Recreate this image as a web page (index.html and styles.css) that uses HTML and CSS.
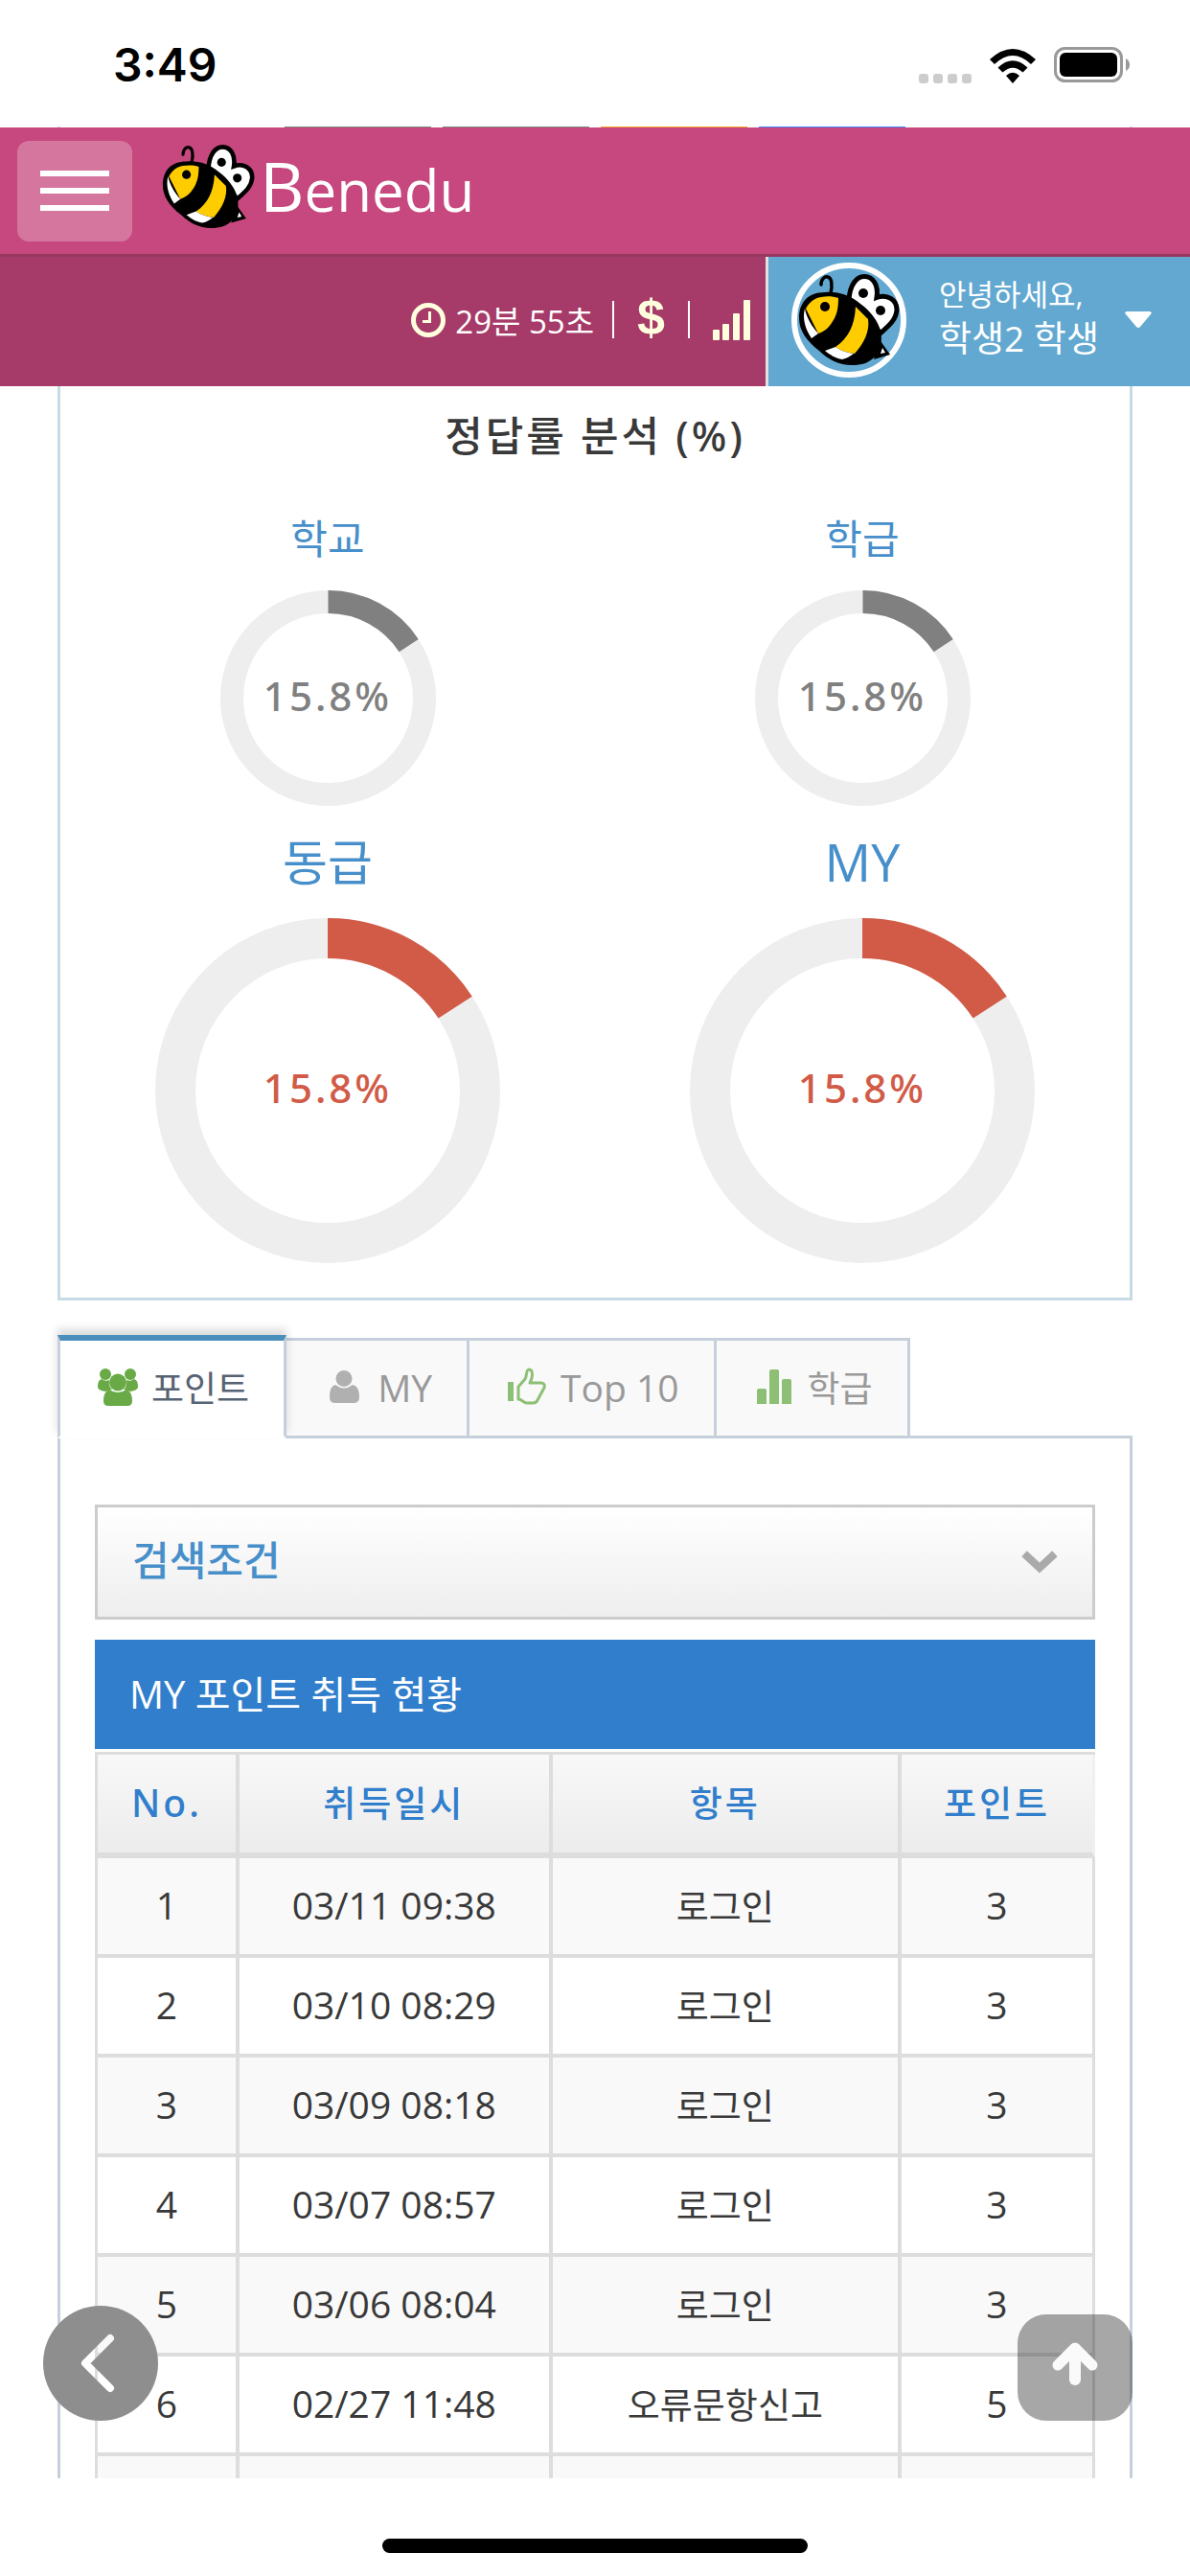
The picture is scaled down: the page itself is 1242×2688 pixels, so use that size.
FILE: index.html
```html
<!DOCTYPE html>
<html lang="ko">
<head>
    <meta charset="UTF-8">
    <meta name="viewport" content="width=device-width, initial-scale=1.0">
    <title>Benedu</title>
    <link rel="stylesheet" href="styles.css">
</head>
<body>
    <!-- Bee mascot, shared by the logo and the avatar -->
    <svg class="defs" aria-hidden="true">
        <symbol id="bee" viewBox="0 0 106 98">
            <path d="M24 12c0-6 4-9 7-8 4 1 5 8 3 17" fill="none" stroke="#000" stroke-width="3.5" stroke-linecap="round"/>
            <path d="M84 68l12 17-17 5z" fill="#000"/>
            <path d="M53 28C54 12 61 3.500 69 3.500c10 0 15 10 13 22 11-4 21 2 21 13-1 11-9 17-17 24z" fill="#fff" stroke="#000" stroke-width="5"/>
            <circle cx="68" cy="21" r="5"/>
            <circle cx="86" cy="39" r="5"/>
            <path d="M1 47C1 31 10 20 28 20c14-1 26 3 37 12 11 8 18 18 21 28 2 10 1 20-6 27-6 7-14 9-24 9-13 0-25-6-34-15C9 71 1 60 1 47z"/>
            <path d="M8 37c4-7 9-11 16-12 6-1 12-1 18 1 0 12-2 19-7 26-3 5-8 9-14 11z" fill="#ffcc00"/>
            <path d="M7 37c2 10 7 18 14 26l-7 5C8 59 4 48 7 37z" fill="#fff"/>
            <circle cx="28" cy="35" r="5"/>
            <path d="M60 35l13 13c2 12-4 25-14 36-8-1-14-3-20-7 13-9 20-22 21-42z" fill="#ffcc00"/>
            <path d="M39 77c6 4 12 6 19 7-4 3-7 5-12 6-7-1-13-5-18-9z" fill="#fff"/>
            <path d="M88 78l3 5-5 1z" fill="#fff"/>
        </symbol>
    </svg>

    <div class="status-bar">
        <span class="status-time">3:49</span>
        <div class="status-icons">
            <span class="dots"><i></i><i></i><i></i><i></i></span>
            <svg width="48" height="36" viewBox="0 0 48 36">
                <path d="M0 11Q24-11 48 11L43 16Q24-2 5 16z"/>
                <path d="M8.500 19.500Q24 5 39.500 19.500L34.500 24.500Q24 15 13.500 24.500z"/>
                <path d="M17 28Q24 21.500 31 28L24 36z"/>
            </svg>
            <svg width="80" height="38" viewBox="0 0 80 38">
                <rect x="1.500" y="1.500" width="69" height="34" rx="10" fill="none" stroke="#999" stroke-width="3"/>
                <rect x="6" y="6" width="60" height="25" rx="6"/>
                <path d="M75 12q4 2 4 6.500t-4 6.500z" fill="#999"/>
            </svg>
        </div>
    </div>

    <!-- Lower edge of the content scrolled under the header -->
    <div class="scrolled-edge"><i class="edge-gray"></i><i class="edge-gray"></i><i class="edge-orange"></i><i class="edge-blue"></i></div>

    <header class="navbar">
        <button class="menu-toggle" aria-label="메뉴"><i></i><i></i><i></i></button>
        <a class="brand" href="#">
            <svg class="brand-bee"><use href="#bee"/></svg>
            <span class="brand-name"><b>B</b>enedu</span>
        </a>
    </header>

    <nav class="user-bar">
        <div class="user-tools">
            <svg width="36" height="36" viewBox="0 0 36 36" fill="none" stroke="#ffffdd" stroke-width="5">
                <circle cx="18" cy="18" r="15.500"/>
                <path d="M19.500 9v10.500H12" stroke-width="3"/>
            </svg>
            <span class="timer">29분 55초</span>
            <span class="bar"></span>
            <a class="dollar" href="#">$</a>
            <span class="bar"></span>
            <svg class="signal" width="39" height="42" viewBox="0 0 39 42" fill="#ffffdd">
                <rect y="31" width="7" height="11" rx="1"/>
                <rect x="10" y="25" width="7" height="17" rx="1"/>
                <rect x="21" y="14" width="7" height="28" rx="1"/>
                <rect x="32" width="7" height="42" rx="1"/>
            </svg>
        </div>
        <button class="user-menu">
            <span class="avatar"><svg><use href="#bee"/></svg></span>
            <span class="user-info"><small>안녕하세요,</small>학생2 학생</span>
            <svg width="28" height="18" viewBox="0 0 28 18" fill="#fff"><path d="M2 0h24q3 1 1 3L16 16q-2 2-4 0L1 3Q-1 1 2 0z"/></svg>
        </button>
    </nav>

    <main class="content">
        <section class="stats">
            <h2>정답률 분석 (%)</h2>
            <div class="charts">
                <div class="chart">
                    <h3>학교</h3>
                    <div class="ring ring-small">
                        <svg viewBox="0 0 225 225"><circle cx="112.500" cy="112.500" r="100.500"/><circle class="value" cx="112.500" cy="112.500" r="100.500" pathLength="1000" stroke-dasharray="158 842"/></svg>
                        <span>15.8%</span>
                    </div>
                </div>
                <div class="chart">
                    <h3>학급</h3>
                    <div class="ring ring-small">
                        <svg viewBox="0 0 225 225"><circle cx="112.500" cy="112.500" r="100.500"/><circle class="value" cx="112.500" cy="112.500" r="100.500" pathLength="1000" stroke-dasharray="158 842"/></svg>
                        <span>15.8%</span>
                    </div>
                </div>
                <div class="chart">
                    <h3 class="large">동급</h3>
                    <div class="ring ring-large">
                        <svg viewBox="0 0 360 360"><circle cx="180" cy="180" r="159"/><circle class="value" cx="180" cy="180" r="159" pathLength="1000" stroke-dasharray="158 842"/></svg>
                        <span>15.8%</span>
                    </div>
                </div>
                <div class="chart">
                    <h3 class="large latin">MY</h3>
                    <div class="ring ring-large">
                        <svg viewBox="0 0 360 360"><circle cx="180" cy="180" r="159"/><circle class="value" cx="180" cy="180" r="159" pathLength="1000" stroke-dasharray="158 842"/></svg>
                        <span>15.8%</span>
                    </div>
                </div>
            </div>
        </section>

        <div class="tabs" role="tablist">
            <button class="tab active" role="tab">
                <svg viewBox="0 0 48 42" fill="#69aa46">
                    <circle cx="11" cy="8" r="6"/><circle cx="37" cy="8" r="6"/>
                    <path d="M7 13q4 3 8 1-1 7 3 10-5 1-7 2-8-1-8-5 0-7 4-8zM41 13q-4 3-8 1 1 7-3 10 5 1 7 2 8-1 8-5 0-7-4-8z"/>
                    <circle cx="24" cy="16.500" r="9"/>
                    <path d="M15 24q9 6 18 0 6 2 6 12 0 5-5 5H14q-5 0-5-5 0-10 6-12z"/>
                </svg>
                포인트
            </button>
            <button class="tab" role="tab">
                <svg viewBox="0 0 48 42" fill="#b0b0b0">
                    <circle cx="24" cy="12.500" r="8.500"/>
                    <path d="M15 19q9 7 18 0 7 1 7 13 0 6-6 6H15q-6 0-6-6 0-12 6-13z"/>
                </svg>
                <span class="latin">MY</span>
            </button>
            <button class="tab" role="tab">
                <svg viewBox="0 0 48 42" fill="none" stroke="#8dbf74" stroke-width="3" stroke-linejoin="round">
                    <path d="M4 16h6v20H4z" fill="#8dbf74" stroke="none"/>
                    <path d="M15 34V21l7-8c2-3 1-10 4-10 5 0 4 9 1 14h12c3 0 4 3 3 5l-7 13c-1 3-3 3-5 3h-6c-4 0-5-4-9-4z"/>
                </svg>
                <span class="latin">Top 10</span>
            </button>
            <button class="tab" role="tab">
                <svg viewBox="0 0 48 42" fill="#8dbf74">
                    <path d="M6 39V25q0-2 2-2h6q2 0 2 2v14zM19 39V5q0-2 2-2h6q2 0 2 2v34zM32 39V15q0-2 2-2h6q2 0 2 2v24z"/>
                </svg>
                학급
            </button>
        </div>

        <section class="tab-content">
            <button class="search-toggle">
                검색조건
                <svg width="38" height="25" viewBox="0 0 38 25"><path d="M6 6l13 12L32 6" fill="none" stroke="#aaa" stroke-width="8" stroke-linecap="square"/></svg>
            </button>
            <h2 class="table-title">MY 포인트 취득 현황</h2>
            <table class="points">
                <colgroup><col class="col-no"><col class="col-date"><col class="col-item"><col></colgroup>
                <thead>
                    <tr><th class="latin">No.</th><th>취득일시</th><th>항목</th><th>포인트</th></tr>
                </thead>
                <tbody>
                    <tr><td>1</td><td>03/11 09:38</td><td class="item">로그인</td><td>3</td></tr>
                    <tr><td>2</td><td>03/10 08:29</td><td class="item">로그인</td><td>3</td></tr>
                    <tr><td>3</td><td>03/09 08:18</td><td class="item">로그인</td><td>3</td></tr>
                    <tr><td>4</td><td>03/07 08:57</td><td class="item">로그인</td><td>3</td></tr>
                    <tr><td>5</td><td>03/06 08:04</td><td class="item">로그인</td><td>3</td></tr>
                    <tr><td>6</td><td>02/27 11:48</td><td class="item">오류문항신고</td><td>5</td></tr>
                    <tr><td></td><td></td><td></td><td></td></tr>
                </tbody>
            </table>
        </section>
    </main>

    <button class="go-back" aria-label="뒤로">
        <svg width="120" height="120" viewBox="0 0 120 120">
            <mask id="back-arrow">
                <rect width="120" height="120" fill="#fff"/>
                <path d="M70 34L44 60l26 26" fill="none" stroke="#000" stroke-width="8" stroke-linecap="round" stroke-linejoin="round"/>
            </mask>
            <circle cx="60" cy="60" r="60" fill="#8e8e8e" mask="url(#back-arrow)"/>
        </svg>
    </button>
    <button class="go-top" aria-label="맨 위로">
        <svg width="48" height="46" viewBox="0 0 48 46" fill="none" stroke="#fff" stroke-linejoin="round">
            <path d="M6 25L24 7l18 18" stroke-width="11" stroke-linecap="round"/>
            <path d="M24 8v32" stroke-width="12" stroke-linecap="round"/>
        </svg>
    </button>

    <footer class="home-area"><span class="home-indicator"></span></footer>
</body>
</html>
```
FILE: styles.css
```css
* {
    box-sizing: border-box;
}
body {
    margin: 0;
    height: 100vh;
    display: flex;
    flex-direction: column;
    background: #fff;
    color: #393939;
    font-family: "Open Sans", "Noto Sans CJK KR", sans-serif;
    font-size: 37px;
}
h2, h3 {
    margin: 0;
    font-weight: 400;
}
button {
    margin: 0;
    padding: 0;
    border: none;
    background: none;
    color: inherit;
    font: inherit;
}
a {
    color: inherit;
    text-decoration: none;
}
svg {
    display: block;
    flex-shrink: 0;
}
.defs {
    position: absolute;
    width: 0;
    height: 0;
}

/* Status bar */
.status-bar {
    display: flex;
    flex-shrink: 0;
    justify-content: space-between;
    align-items: center;
    height: 132px;
    padding: 4px 62px 0 118px;
}
.status-time {
    color: #000;
    font: 600 48px/60px Inter, sans-serif;
}
.status-icons {
    display: flex;
    align-items: flex-end;
    gap: 19px;
}
.dots {
    display: flex;
    gap: 5px;
}
.dots i {
    width: 10px;
    height: 10px;
    border-radius: 3px;
    background: #ccc;
}
.scrolled-edge {
    display: flex;
    flex-shrink: 0;
    justify-content: center;
    gap: 12px;
    height: 1px;
    margin: 0 60px;
    border: solid #c7dbe5;
    border-width: 0 3px;
}
.scrolled-edge i {
    width: 153px;
}
.edge-gray {
    background: #7c857c;
}
.edge-orange {
    background: #f5a623;
}
.edge-blue {
    background: #4285f4;
}

/* Header */
.navbar {
    display: flex;
    flex-shrink: 0;
    align-items: center;
    height: 135px;
    padding: 0 18px;
    border-bottom: 3px solid #973760;
    background: #c6487e;
}
.menu-toggle {
    display: flex;
    flex-direction: column;
    align-items: center;
    justify-content: center;
    gap: 12px;
    width: 120px;
    height: 105px;
    border-radius: 12px;
    background: rgba(255, 255, 255, 0.25);
}
.menu-toggle i {
    width: 72px;
    height: 6px;
    background: #fff;
}
.brand {
    display: flex;
    align-items: center;
    gap: 5px;
    margin-left: 31px;
    padding-bottom: 8px;
}
.brand-bee {
    width: 97px;
    height: 90px;
}
.brand-name {
    color: #fff;
    font-size: 60px;
    line-height: 90px;
}
.brand-name b {
    font-size: 72px;
    font-weight: 400;
}

.user-bar {
    display: flex;
    flex-shrink: 0;
    justify-content: flex-end;
    height: 135px;
    background: #a63b69;
}
.user-tools {
    display: flex;
    align-items: center;
    gap: 10px;
    padding: 0 16px 4px 0;
    color: #fff;
}
.timer {
    font-size: 33px;
}
.bar {
    width: 2px;
    height: 39px;
    margin: 0 9px;
    background: #fff;
}
.dollar {
    margin: 0 5px;
    padding-bottom: 6px;
    color: #ffffdd;
    font: bold 52px/60px "Liberation Sans", sans-serif;
}
.signal {
    margin-left: 5px;
}
.user-menu {
    display: flex;
    align-items: center;
    width: 443px;
    padding: 0 24px 4px;
    border-left: 3px solid #e1e1e1;
    background: #62a8d1;
    color: #fff;
    text-align: left;
}
.avatar {
    display: flex;
    align-items: center;
    justify-content: center;
    width: 120px;
    height: 120px;
    border: 6px solid #fff;
    border-radius: 50%;
}
.avatar svg {
    width: 106px;
    height: 98px;
}
.user-info {
    flex: 1;
    margin-left: 34px;
    padding-bottom: 8px;
    font-size: 37px;
    line-height: 45px;
}
.user-info small {
    display: block;
    font-size: 31px;
}
.user-menu > svg {
    margin-right: 16px;
}

/* Page content */
.content {
    flex: 1;
    min-height: 0;
    overflow: hidden;
    padding: 0 60px;
}
.stats {
    padding: 22px 0 36px;
    border: 3px solid #c7dbe5;
    border-top: none;
    text-align: center;
}
.stats h2 {
    font-family: "Noto Sans", "Noto Sans CJK KR", sans-serif;
    font-size: 43px;
    font-weight: 500;
    line-height: 60px;
    letter-spacing: 3px;
}
.charts {
    display: grid;
    grid-template-columns: 1fr 1fr;
    row-gap: 25px;
    margin-top: 47px;
}
.chart h3 {
    margin-bottom: 24px;
    color: #478fca;
    font-size: 42px;
    line-height: 60px;
}
.chart h3.large {
    margin-bottom: 26px;
    font-size: 51px;
    line-height: 66px;
}
.chart h3.large.latin {
    font-size: 54px;
}
.ring {
    display: grid;
    place-items: center;
    margin: 0 auto;
}
.ring svg,
.ring span {
    grid-area: 1 / 1;
}
.ring svg {
    width: 100%;
    transform: rotate(-90deg);
}
.ring circle {
    fill: none;
    stroke: #eee;
}
.ring span {
    padding-bottom: 6px;
    font-family: "Noto Sans", sans-serif;
    font-size: 42px;
    font-weight: 500;
    line-height: 60px;
    letter-spacing: 3px;
}
.ring-small {
    width: 225px;
    color: #808080;
}
.ring-large {
    width: 360px;
    color: #d15b47;
}
.ring-small circle {
    stroke-width: 24px;
}
.ring-large circle {
    stroke-width: 42px;
}
.ring .value {
    stroke: currentColor;
}

/* Tabs */
.tabs {
    display: flex;
    position: relative;
    z-index: 1;
    align-items: flex-end;
    margin: 36px 0 -3px;
}
.tab {
    display: flex;
    align-items: center;
    gap: 11px;
    height: 105px;
    margin-left: -3px;
    padding: 0 36px 3px;
    border: 3px solid #c5d0dc;
    background: #f9f9f9;
    color: #999;
}
.tab svg {
    width: 48px;
    height: 42px;
}
.tab .latin {
    font-size: 39px;
}
.tab.active {
    position: relative;
    height: 108px;
    margin-left: 0;
    border-top: 6px solid #4c8fbd;
    border-bottom-color: #fff;
    background: #fff;
    color: #576373;
    box-shadow: 0 -6px 9px rgba(0, 0, 0, 0.15);
}
.tab-content {
    position: relative;
    padding: 69px 36px 0;
    border: 3px solid #c5d0dc;
}
.search-toggle {
    display: flex;
    align-items: center;
    justify-content: space-between;
    width: 100%;
    height: 120px;
    padding: 0 36px 10px;
    border: 3px solid #ccc;
    background: linear-gradient(#fff, #eee);
    color: #478fca;
    font-size: 42px;
    font-weight: 500;
}
.search-toggle svg {
    margin-top: 10px;
}
.table-title {
    margin: 21px 0 3px;
    padding-left: 36px;
    background: #307ecc;
    color: #fff;
    font-size: 40px;
    line-height: 114px;
}

/* Point history */
.points {
    width: 100%;
    table-layout: fixed;
    border: solid #ddd;
    border-width: 3px 0 0 3px;
    border-spacing: 0;
    text-align: center;
}
.col-no {
    width: 14.2%;
}
.col-date {
    width: 31.4%;
}
.col-item {
    width: 35%;
}
.points th {
    height: 108px;
    padding: 0 0 4px;
    border: solid #ddd;
    border-width: 0 4px 6px 0;
    background: linear-gradient(#f8f8f8, #ececec);
    color: #307ecc;
    font-size: 37px;
    font-weight: 500;
    letter-spacing: 3px;
}
.points th.latin {
    font-family: "Noto Sans", sans-serif;
    font-size: 39px;
}
.points td {
    height: 104px;
    padding: 0 0 3px;
    border: solid #ddd;
    border-width: 0 4px 4px 0;
    font-size: 39px;
}
.points td.item {
    font-size: 37px;
}
.points td:last-child {
    border-right-width: 3px;
}
.points th:last-child {
    border-right: 3px solid #f0f0f0;
}
.points tbody tr:nth-child(odd) td {
    background: #f9f9f9;
}

/* Floating buttons */
.go-back,
.go-top {
    position: fixed;
    bottom: 162px;
    z-index: 2;
}
.go-back {
    left: 45px;
}
.go-top {
    right: 60px;
    display: flex;
    justify-content: center;
    width: 120px;
    height: 111px;
    padding-top: 28px;
    border-radius: 30px;
    background: rgba(34, 34, 34, 0.4);
}
.go-top svg {
    opacity: 0.95;
}

.home-area {
    display: flex;
    flex-shrink: 0;
    align-items: flex-end;
    justify-content: center;
    height: 102px;
    padding-bottom: 24px;
}
.home-indicator {
    width: 444px;
    height: 15px;
    border-radius: 8px;
    background: #000;
}
```
